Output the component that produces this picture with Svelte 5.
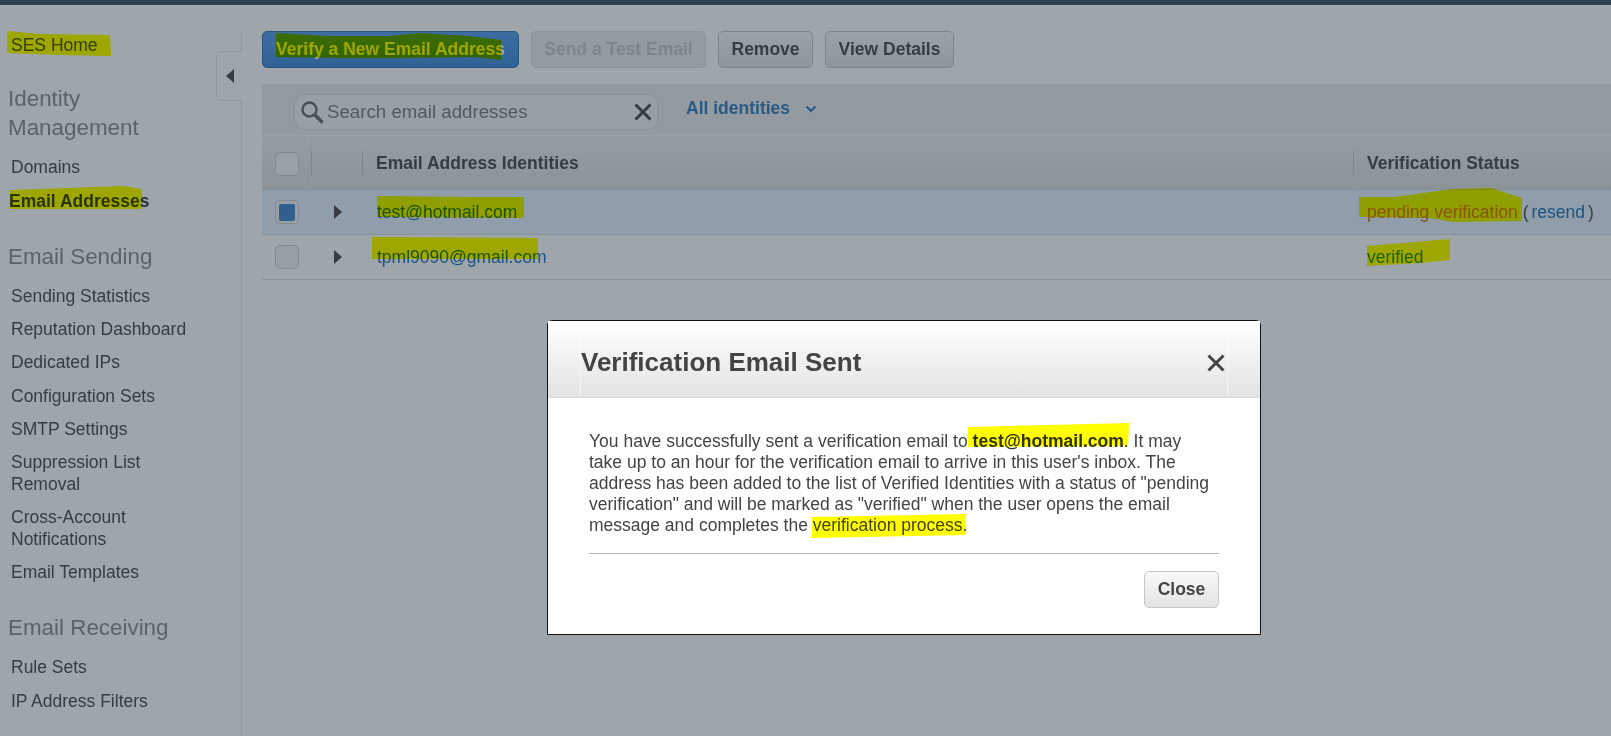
<script>
  const groups = [
    { title: 'Identity Management', items: [{ label: 'Domains' }, { label: 'Email Addresses', active: true }] },
    {
      title: 'Email Sending',
      items: [
        { label: 'Sending Statistics' },
        { label: 'Reputation Dashboard' },
        { label: 'Dedicated IPs' },
        { label: 'Configuration Sets' },
        { label: 'SMTP Settings' },
        { label: 'Suppression List Removal' },
        { label: 'Cross-Account Notifications' },
        { label: 'Email Templates' }
      ]
    },
    { title: 'Email Receiving', items: [{ label: 'Rule Sets' }, { label: 'IP Address Filters' }] }
  ];

  const rows = [
    { email: 'test@hotmail.com', status: 'pending verification', pending: true, checked: true },
    { email: 'tpml9090@gmail.com', status: 'verified', pending: false, checked: false }
  ];

  // the marker strokes someone painted over the screenshot
  const marks = [
    '7,31 40,34 110,35 111,56 60,55 7,53',
    '10,190 122,186 142,189 142,209 10,209',
    '276,33 327,36 389,36 420,33 468,36 501,40 501,60 475,57 396,58 344,58 276,57',
    '377,196 475,197 524,197 524,218 377,217',
    '372,237 538,238 538,259 372,259',
    '1359,197 1394,197 1452,189 1491,188 1522,198 1522,221 1454,222 1429,218 1359,217',
    '1367,246 1450,239 1450,260 1421,263 1367,266',
    '968,427 1129,423 1128,446 968,447',
    '812,517 966,514 966,535 812,538'
  ];
</script>

<div class="page">
  <div class="topbar"></div>
  <div class="layout">
    <nav class="sidebar">
      <a class="home" href="#home">SES Home</a>
      {#each groups as group}
        <h3>{group.title}</h3>
        <ul>
          {#each group.items as item}
            <li class:active={item.active}>{item.label}</li>
          {/each}
        </ul>
      {/each}
      <button class="collapse" aria-label="Collapse">
        <svg width="9" height="14" viewBox="0 0 9 14"><path d="M8 0v14L0 7z" fill="#444" /></svg>
      </button>
    </nav>

    <main>
      <div class="actions">
        <button class="btn primary">Verify a New Email Address</button>
        <button class="btn disabled">Send a Test Email</button>
        <button class="btn">Remove</button>
        <button class="btn">View Details</button>
      </div>

      <div class="filter">
        <div class="search">
          <svg width="24" height="24" viewBox="0 0 24 24" fill="none" stroke="#666" stroke-width="2.4">
            <circle cx="9.5" cy="9.5" r="7" />
            <path d="M15 15l6.5 6.5" stroke-width="3.6" stroke-linecap="round" />
          </svg>
          <span class="placeholder">Search email addresses</span>
          <svg class="clear" width="18" height="18" viewBox="0 0 18 18" fill="none" stroke="#444" stroke-width="3">
            <path d="M1.5 1.5l15 15M16.5 1.5l-15 15" />
          </svg>
        </div>
        <span class="scope">All identities</span>
        <svg class="caret" width="12" height="8" viewBox="0 0 12 8" fill="none" stroke="#2f78b9" stroke-width="2.2">
          <path d="M1.5 1.5L6 6l4.5-4.5" />
        </svg>
      </div>

      <div class="row head">
        <div class="c-check"><span class="box"></span></div>
        <div class="c-arrow"></div>
        <div class="c-email">Email Address Identities</div>
        <div class="c-status">Verification Status</div>
      </div>
      {#each rows as row}
        <div class="row" class:selected={row.checked}>
          <div class="c-check">
            <span class="box">{#if row.checked}<i></i>{/if}</span>
          </div>
          <div class="c-arrow">
            <svg width="8" height="14" viewBox="0 0 8 14"><path d="M0 0v14l8-7z" fill="#444" /></svg>
          </div>
          <div class="c-email link">{row.email}</div>
          <div class="c-status">
            {#if row.pending}
              <span class="pending">pending verification</span>
              <span class="resend">(<span class="link">resend</span>)</span>
            {:else}
              <span class="verified">{row.status}</span>
            {/if}
          </div>
        </div>
      {/each}
    </main>
  </div>

  <div class="overlay"></div>

  <div class="modal">
    <header>
      <div class="head-inner">
        <h2>Verification Email Sent</h2>
        <svg width="18" height="18" viewBox="0 0 18 18" fill="none" stroke="#444" stroke-width="3">
          <path d="M1.5 1.5l15 15M16.5 1.5l-15 15" />
        </svg>
      </div>
    </header>
    <div class="content">
      <p>
        You have successfully sent a verification email to <strong>test@hotmail.com</strong>. It may take up to an hour
        for the verification email to arrive in this user's inbox. The address has been added to the list of Verified
        Identities with a status of "pending verification" and will be marked as "verified" when the user opens the
        email message and completes the verification process.
      </p>
      <div class="modal-actions">
        <button class="btn">Close</button>
      </div>
    </div>
  </div>

  <svg class="marks" width="1611" height="736" viewBox="0 0 1611 736">
    {#each marks as points}
      <polygon {points} fill="#ffff00" />
    {/each}
  </svg>
</div>

<style>
  :global(body) {
    margin: 0;
    overflow: hidden;
  }

  .page {
    position: relative;
    width: 1611px;
    height: 736px;
    overflow: hidden;
    background: #fff;
    font-family: 'Liberation Sans', Arial, sans-serif;
    font-size: 17.5px;
    color: #444;
  }

  .topbar {
    height: 5px;
    background: #364a5e;
  }

  .layout {
    display: flex;
    height: 731px;
  }

  /* SIDEBAR */
  .sidebar {
    position: relative;
    box-sizing: border-box;
    width: 242px;
    flex: none;
    margin-top: 26px;
    padding: 5px 0 0 11px;
    border-right: 1px solid #e6e6e6;
  }

  .home {
    display: block;
    color: #444;
    text-decoration: none;
    line-height: 18px;
    margin-bottom: 30px;
  }

  h3 {
    margin: 0 0 14px -3px;
    font-size: 22.4px;
    font-weight: 400;
    line-height: 29px;
    color: #888;
    width: 180px;
  }

  ul {
    list-style: none;
    margin: 0 0 30px;
    padding: 0;
    width: 185px;
  }

  li {
    line-height: 22px;
    margin-bottom: 11.2px;
  }

  li.active {
    font-weight: 700;
    margin-top: 12px;
    margin-left: -2px;
    color: #333;
  }

  .collapse {
    position: absolute;
    top: 20px;
    right: -1px;
    width: 26px;
    height: 50px;
    padding: 0 0 0 2px;
    background: #fff;
    border: 1px solid #e6e6e6;
    border-right: none;
    border-radius: 5px 0 0 5px;
    display: flex;
    align-items: center;
    justify-content: center;
  }

  /* CONTENIDO */
  main {
    flex: 1;
    min-width: 0;
    padding: 26px 0 0 20px;
  }

  .actions {
    display: flex;
    gap: 12px;
    margin-bottom: 16px;
  }

  .btn {
    height: 37px;
    padding: 0 12.5px;
    font: 700 17.5px 'Liberation Sans', Arial, sans-serif;
    color: #444;
    background: linear-gradient(#f9f9f9, #e3e3e3);
    border: 1px solid #c6c6c6;
    border-radius: 5px;
  }

  .btn.primary {
    width: 257px;
    padding: 0;
    color: #fff;
    background: linear-gradient(#5299ea, #3c86d8);
    border-color: #2f6ead;
  }

  .btn.disabled {
    width: 175px;
    padding: 0;
    color: #c4c4c4;
    background: #ececec;
    border-color: #dedede;
  }

  .filter {
    display: flex;
    align-items: center;
    height: 52px;
    box-sizing: border-box;
    padding: 4px 0 0 32px;
    background: #ebebeb;
    border-bottom: 1px solid #f7f7f7;
  }

  .search {
    box-sizing: border-box;
    width: 364px;
    height: 36px;
    display: flex;
    align-items: center;
    gap: 3px;
    padding: 0 5px 0 5px;
    background: #f4f4f4;
    border: 1px solid #dcdcdc;
    border-radius: 10px;
  }

  .placeholder {
    flex: 1;
    font-size: 18.7px;
    color: #777;
  }

  .scope {
    margin: -6px 0 0 28px;
    font-weight: 700;
    color: #2f78b9;
  }

  .caret {
    margin: -6px 0 0 15px;
  }

  .row {
    display: flex;
    align-items: center;
    height: 45px;
    box-sizing: border-box;
    border-bottom: 1px solid #dcdcdc;
  }

  .row.head {
    height: 54px;
    font-weight: 700;
    background: linear-gradient(#f0f0f0, #dedede);
    border-bottom-color: #d0d0d0;
  }

  .row.selected {
    background: #e4f0fb;
  }

  .c-check {
    width: 49px;
    flex: none;
    box-sizing: border-box;
    padding-left: 13px;
    display: flex;
  }

  .head .c-check {
    padding-top: 2px;
  }

  .c-arrow {
    width: 51px;
    flex: none;
    box-sizing: border-box;
    padding-left: 23px;
    display: flex;
  }

  .c-email {
    flex: 1;
    padding-left: 15px;
  }

  .c-status {
    width: 258px;
    flex: none;
    box-sizing: border-box;
    padding-left: 14px;
  }

  .head .c-arrow,
  .head .c-email,
  .head .c-status {
    position: relative;
    align-self: stretch;
    display: flex;
    align-items: center;
    border-left: 1px solid #e8e8e8;
  }

  .head .c-email,
  .head .c-status {
    padding: 2px 0 0 13px;
  }

  /* short dark separator over the faint full-height one */
  .head .c-arrow::before,
  .head .c-email::before,
  .head .c-status::before {
    content: '';
    position: absolute;
    left: -1px;
    top: 15px;
    height: 24px;
    width: 1px;
    background: #c4c4c4;
  }

  .box {
    box-sizing: border-box;
    width: 24px;
    height: 24px;
    display: flex;
    align-items: center;
    justify-content: center;
    background: #f2f2f2;
    border: 1px solid #cfcfcf;
    border-radius: 5px;
  }

  .head .box {
    background: #f7f7f7;
  }

  .box i {
    width: 16px;
    height: 17px;
    background: #3d80c9;
    border-radius: 2px;
  }

  .link {
    color: #1c69b0;
  }

  .pending {
    color: #dd6b10;
  }

  .verified {
    color: #1d8102;
  }

  .resend .link {
    margin: 0 3px;
  }

  /* MODAL */
  .overlay {
    position: absolute;
    inset: 0;
    background: rgba(35, 52, 65, 0.44);
  }

  .modal {
    position: absolute;
    left: 547px;
    top: 320px;
    box-sizing: border-box;
    width: 714px;
    height: 315px;
    background: #fff;
    border: 1px solid #111;
    border-radius: 5px 5px 0 0;
  }

  header {
    box-sizing: border-box;
    height: 77px;
    padding: 0 32px;
    background: linear-gradient(#fff, #e3e3e3);
    border-bottom: 1px solid #d5d5d5;
  }

  .head-inner {
    box-sizing: border-box;
    height: 76px;
    display: flex;
    align-items: center;
    justify-content: space-between;
    padding: 6px 2px 0 0;
    border-left: 1px solid rgba(255, 255, 255, 0.5);
    border-right: 1px solid rgba(255, 255, 255, 0.5);
  }

  .head-inner svg {
    margin-top: 2px;
  }

  h2 {
    margin: 0;
    font-size: 26px;
    font-weight: 700;
    color: #444;
  }

  .content {
    padding: 33px 41px 0;
  }

  p {
    margin: 0;
    padding-bottom: 17px;
    line-height: 21px;
    color: #444;
    border-bottom: 1px solid #b8b8b8;
  }

  strong {
    color: #333;
  }

  .modal-actions {
    display: flex;
    justify-content: flex-end;
    margin-top: 17px;
  }

  .modal-actions .btn {
    width: 75px;
    padding: 0;
  }

  .marks {
    position: absolute;
    inset: 0;
    mix-blend-mode: multiply;
    pointer-events: none;
  }
</style>
